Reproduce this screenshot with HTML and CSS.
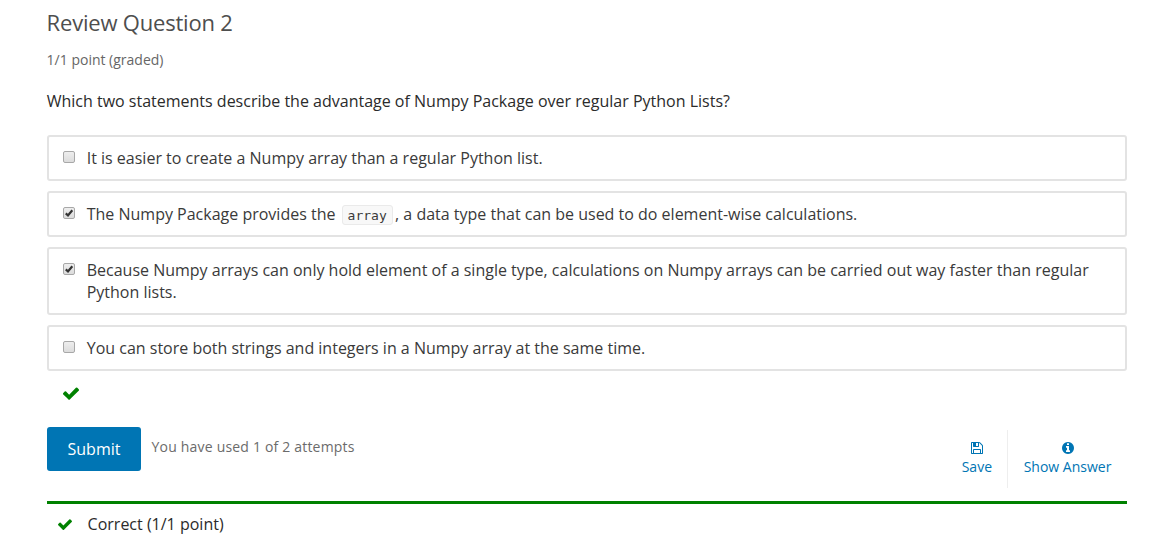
FILE: index.html
```html
<!DOCTYPE html>
<html lang="en">
<head>
<meta charset="utf-8">
<title>Review Question 2</title>
<link rel="stylesheet" href="styles.css">
</head>
<body>
<svg class="defs" width="0" height="0">
  <symbol id="check" viewBox="121 298 1550 1224"><path d="M1671 566q0 40-28 68l-724 724-136 136q-28 28-68 28t-68-28l-136-136-362-362q-28-28-28-68t28-68l136-136q28-28 68-28t68 28l294 295 656-657q28-28 68-28t68 28l136 136q28 28 28 68z"/></symbol>
</svg>
<main class="problem">
  <h1 class="title">Review Question 2</h1>
  <p class="progress">1/1 point (graded)</p>
  <p class="question">Which two statements describe the advantage of Numpy Package over regular Python Lists?</p>
  <div class="choices">
    <label class="choice"><span class="box"></span><span class="text">It is easier to create a Numpy array than a regular Python list.</span></label>
    <label class="choice"><span class="box"><svg viewBox="0 0 12 12"><path d="M2.8 6.4L5 8.5L9.3 3.3"/></svg></span><span class="text">The Numpy Package provides the <code>array</code>, a data type that can be used to do element-wise calculations.</span></label>
    <label class="choice"><span class="box"><svg viewBox="0 0 12 12"><path d="M2.8 6.4L5 8.5L9.3 3.3"/></svg></span><span class="text">Because Numpy arrays can only hold element of a single type, calculations on Numpy arrays can be carried out way faster than regular<br>Python lists.</span></label>
    <label class="choice"><span class="box"></span><span class="text">You can store both strings and integers in a Numpy array at the same time.</span></label>
  </div>
  <svg class="status"><use href="#check"/></svg>
  <div class="actions">
    <button class="submit">Submit</button>
    <span class="attempts">You have used 1 of 2 attempts</span>
    <div class="links">
      <a class="link save"><svg viewBox="128 128 1536 1536"><path d="M512 1536h768v-384h-768v384zm896 0h128v-896q0-14-10-38.5t-20-34.5l-281-281q-10-10-34-20t-39-10v416q0 40-28 68t-68 28h-576q-40 0-68-28t-28-68v-416h-128v1280h128v-416q0-40 28-68t68-28h832q40 0 68 28t28 68v416zm-384-928v-320q0-13-9.5-22.5t-22.5-9.5h-192q-13 0-22.5 9.5t-9.5 22.5v320q0 13 9.5 22.5t22.5 9.5h192q13 0 22.5-9.5t9.5-22.5zm640 32v928q0 40-28 68t-68 28h-1344q-40 0-68-28t-28-68v-1344q0-40 28-68t68-28h928q40 0 88 20t76 48l280 280q28 28 48 76t20 88z"/></svg>Save</a>
      <a class="link show"><svg viewBox="128 128 1536 1536"><path d="M1152 1376v-160q0-14-9-23t-23-9h-96v-512q0-14-9-23t-23-9h-320q-14 0-23 9t-9 23v160q0 14 9 23t23 9h96v320h-96q-14 0-23 9t-9 23v160q0 14 9 23t23 9h448q14 0 23-9t9-23zm-128-896v-160q0-14-9-23t-23-9h-192q-14 0-23 9t-9 23v160q0 14 9 23t23 9h192q14 0 23-9t9-23zm640 416q0 209-103 385.5t-279.5 279.5-385.5 103-385.5-103-279.5-279.5-103-385.5 103-385.5 279.5-279.5 385.5-103 385.5 103 279.5 279.5 103 385.5z"/></svg>Show Answer</a>
    </div>
  </div>
  <div class="result"><svg><use href="#check"/></svg><span>Correct (1/1 point)</span></div>
</main>
</body>
</html>
```
FILE: styles.css
```css
* { box-sizing: border-box; }
body {
  margin: 0;
  background: #fff;
  color: #3a3a3a;
  font: 16px/22px "Open Sans", sans-serif;
  height: 542px;
  overflow: hidden;
}
.defs { display: none; }
.problem { width: 1080px; margin-left: 47px; padding-top: 7px; }
.title { margin: 0 0 0 -0.4px; font-size: 22px; font-weight: 400; line-height: 30px; color: #4e4e4e; letter-spacing: -0.2px; }
.progress { margin: 12px 0 0 -0.4px; font-size: 14px; color: #666; }
.question { margin: 19px 0 0 -0.3px; color: #2b2b2b; }
.choices { display: flex; flex-direction: column; gap: 10px; margin-top: 23px; }
.choice {
  display: flex;
  border: 2px solid #e3e3e3;
  border-radius: 3px;
  padding: 10px 0 10px 14px;
}
.box {
  flex: none;
  width: 12px;
  height: 12px;
  margin: 4px 12px 0 0;
  border: 1px solid #a8a8a8;
  border-radius: 2px;
  background: linear-gradient(#eee, #dcdcdc);
}
.box svg { display: block; width: 12px; height: 12px; margin: -1px; fill: none; stroke: #333; stroke-width: 2.2; }
.text { white-space: nowrap; margin-left: -0.3px; }
code {
  display: inline-block;
  height: 20px;
  margin: 0 2.3px 0 2px;
  padding: 0 5px;
  border: 1px solid #eaeaea;
  border-radius: 3px;
  background: #f8f8f8;
  font: 13px/19px "DejaVu Sans Mono", monospace;
  vertical-align: 0;
}
.status { display: block; width: 16px; height: 13px; margin: 16px 0 0 16px; fill: #008100; }
.actions { display: flex; margin-top: 27px; height: 74px; }
.submit {
  width: 94px;
  height: 44px;
  padding: 0;
  border: 0;
  border-radius: 3px;
  background: #0075b4;
  color: #fff;
  font: 500 16px/44px "Open Sans", sans-serif;
}
.attempts { margin: 9px 0 0 10.6px; font-size: 14px; letter-spacing: 0.19px; color: #6b6b6b; }
.links { display: flex; margin-left: auto; padding-top: 3px; height: 61px; color: #0075b4; font-size: 14px; line-height: 20px; }
.link { display: flex; flex-direction: column; align-items: center; padding-top: 12px; }
.link svg { width: 12px; height: 12px; margin-bottom: 3px; fill: #0075b4; }
.save { padding-right: 15px; border-right: 1px solid #eee; }
.show { width: 119px; }
.result { display: flex; align-items: center; height: 43px; border-top: 3px solid #008100; color: #2b2b2b; }
.result svg { width: 14px; height: 11px; margin: 0 16px 0 10.6px; fill: #008100; }
```
